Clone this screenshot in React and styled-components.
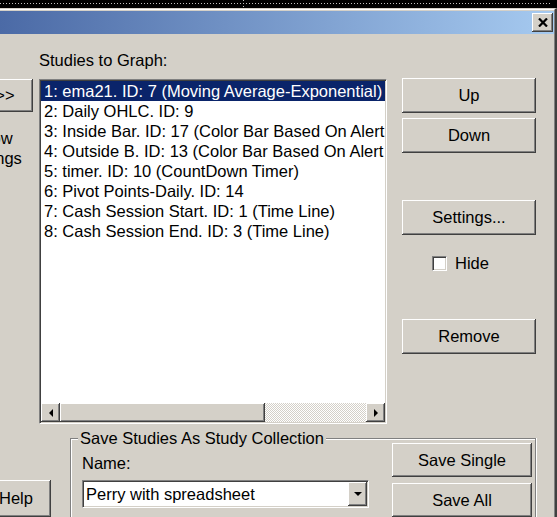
// dependencies
import React from 'react'
import styled, { createGlobalStyle, css } from 'styled-components'

// temporary data
const studies = [
    '1: ema21. ID: 7 (Moving Average-Exponential)',
    '2: Daily OHLC. ID: 9',
    '3: Inside Bar. ID: 17 (Color Bar Based On Alert Condition)',
    '4: Outside B. ID: 13 (Color Bar Based On Alert Condition)',
    '5: timer. ID: 10 (CountDown Timer)',
    '6: Pivot Points-Daily. ID: 14',
    '7: Cash Session Start. ID: 1 (Time Line)',
    '8: Cash Session End. ID: 3 (Time Line)',
]

// shared bevels
const raised = css`
    background: #d4d0c8;
    box-shadow: inset -1px -1px #404040, inset 1px 1px #ffffff,
        inset -2px -2px #808080, inset 2px 2px #d4d0c8;
`

const sunken = css`
    border: 1px solid;
    border-color: #808080 #ffffff #ffffff #808080;
    box-shadow: inset 1px 1px #404040, inset -1px -1px #d4d0c8;
    padding: 1px;
`

// styled components
const GlobalStyle = createGlobalStyle`
    html, body {
        margin: 0;
        padding: 0;
        background: #000;
    }
    body {
        font-family: "Liberation Sans", Arial, sans-serif;
        font-size: 16.5px;
        color: #000;
    }
`

const Screen = styled.div`
    width: 557px;
    height: 517px;
    background: #000;
    display: flex;
    flex-direction: column;
`

const Desktop = styled.div`
    height: 8px;
    flex-shrink: 0;
    background-color: #000;
    background-image:
        repeating-linear-gradient(90deg, #c0c0c0 0 1px, transparent 1px 3px),
        repeating-linear-gradient(180deg, #c0c0c0 0 1px, transparent 1px 3px);
    background-size: 552px 1px, 1px 8px;
    background-position: 0 3px, 243px 0;
    background-repeat: no-repeat;
`

const Window = styled.div`
    height: 509px;
    box-sizing: border-box;
    border-top: 1px solid #d4d0c8;
    border-right: 2px solid #404040;
    display: flex;
    flex-direction: column;
`

const Frame = styled.div`
    flex: 1;
    border-top: 1px solid #ffffff;
    border-right: 1px solid #808080;
    padding-top: 1px;
    background: #d4d0c8;
    display: flex;
    flex-direction: column;
`

const TitleBar = styled.div`
    height: 23px;
    flex-shrink: 0;
    background: linear-gradient(90deg, #4b6aa6, #a6caf0);
    display: flex;
    justify-content: flex-end;
    align-items: center;
    padding-right: 1px;
`

const CloseButton = styled.div`
    ${raised};
    width: 21px;
    height: 19px;
    display: flex;
    align-items: center;
    justify-content: center;
`

const Body = styled.div`
    display: flex;
    flex-direction: column;
`

const TopSection = styled.div`
    display: flex;
    height: 390px;
`

const LeftStrip = styled.div`
    width: ${(p) => p.$width}px;
    flex-shrink: 0;
    overflow: clip;
    display: flex;
    flex-direction: column;
    align-items: flex-end;
`

const Button = styled.div`
    ${raised};
    width: ${(p) => p.$width}px;
    height: ${(p) => p.$height || 35}px;
    margin-top: ${(p) => p.$top || 0}px;
    margin-right: ${(p) => p.$right || 0}px;
    flex-shrink: 0;
    display: flex;
    align-items: center;
    justify-content: center;
    white-space: nowrap;
    box-sizing: border-box;
`

const SideText = styled.div`
    width: 60px;
    flex-shrink: 0;
    margin-top: 16px;
    margin-right: 13px;
    text-align: center;
    line-height: 20px;
    white-space: nowrap;
`

const Center = styled.div`
    width: 348px;
    margin-left: 4px;
    display: flex;
    flex-direction: column;
`

const Label = styled.div`
    line-height: 19px;
    margin-top: ${(p) => p.$top || 0}px;
`

const ListBox = styled.div`
    ${sunken};
    margin-top: 9px;
    height: 345px;
    box-sizing: border-box;
    background: #fff;
    display: flex;
    flex-direction: column;
`

const Rows = styled.div`
    flex: 1;
    overflow: clip;
`

const Row = styled.div`
    height: 20px;
    line-height: 20px;
    padding-left: 3px;
    white-space: nowrap;
    overflow: clip;
    background: ${(p) => (p.$selected ? '#0a246a' : 'transparent')};
    color: ${(p) => (p.$selected ? '#fff' : '#000')};
`

const HScroll = styled.div`
    height: 19px;
    flex-shrink: 0;
    display: flex;
`

const ArrowButton = styled.div`
    ${raised};
    width: 19px;
    height: 19px;
    flex-shrink: 0;
    display: flex;
    align-items: center;
    justify-content: center;
`

const Thumb = styled.div`
    ${raised};
    width: 205px;
`

const Track = styled.div`
    flex: 1;
    background: repeating-conic-gradient(#ffffff 0 25%, #d4d0c8 0 50%) 0 0 / 2px 2px;
`

const RightColumn = styled.div`
    width: 134px;
    margin-left: 15px;
    display: flex;
    flex-direction: column;
`

const CheckRow = styled.div`
    height: 20px;
    margin-top: 18px;
    padding-left: 30px;
    display: flex;
    align-items: center;
    gap: 8px;
`

const CheckBox = styled.div`
    ${sunken};
    width: 15px;
    height: 15px;
    box-sizing: border-box;
    background: #fff;
`

const BottomSection = styled.div`
    height: 93px;
    display: flex;
`

const GroupBox = styled.div`
    width: 466px;
    height: 79px;
    flex-shrink: 0;
    margin-left: 19px;
    margin-top: 14px;
    box-sizing: border-box;
    border: 1px solid #808080;
    border-bottom: none;
    box-shadow: inset 1px 1px #ffffff, 1px 0 #ffffff;
    padding: 4px 3px 0 11px;
    display: flex;
    gap: 23px;
`

const GroupColumn = styled.div`
    width: ${(p) => p.$width}px;
    display: flex;
    flex-direction: column;
`

const GroupTitle = styled.div`
    align-self: flex-start;
    margin: -14px 0 0 -4px;
    padding: 0 2px;
    line-height: 19px;
    background: #d4d0c8;
    white-space: nowrap;
`

const Combo = styled.div`
    ${sunken};
    margin-top: 7px;
    height: 28px;
    flex-shrink: 0;
    box-sizing: border-box;
    background: #fff;
    display: flex;
    align-items: center;
`

const ComboText = styled.div`
    flex: 1;
    padding-left: 2px;
    white-space: nowrap;
`

const DropButton = styled(ArrowButton)`
    height: 24px;
`

// little drawings
const Triangle = ({ dir }) => {
    const points = {
        left: '4,0 4,8 0,4',
        right: '0,0 0,8 4,4',
        down: '0,0 8,0 4,4',
    }[dir]
    const size = dir === 'down' ? { width: 8, height: 4 } : { width: 4, height: 8 }
    return (
        <svg {...size} viewBox={`0 0 ${size.width} ${size.height}`}>
            <polygon points={points} fill="#000" />
        </svg>
    )
}

const CloseGlyph = () => (
    <svg width="10" height="9" viewBox="0 0 10 9">
        <path d="M1 0.5 L9 8.5 M9 0.5 L1 8.5" stroke="#000" strokeWidth="2.2" />
    </svg>
)

// dialog driver code
const App = () => {
    return (
        <Screen>
            <GlobalStyle />
            <Desktop />
            <Window>
                <Frame>
                    <TitleBar>
                        <CloseButton>
                            <CloseGlyph />
                        </CloseButton>
                    </TitleBar>
                    <Body>
                        <TopSection>
                            <LeftStrip $width={35}>
                                <Button $width={90} $height={33} $top={45} $right={2}>Add &gt;&gt;</Button>
                                <SideText>
                                    Show
                                    <br />
                                    Settings
                                </SideText>
                            </LeftStrip>
                            <Center>
                                <Label $top={17}>Studies to Graph:</Label>
                                <ListBox>
                                    <Rows>
                                        {studies.map((s, i) => (
                                            <Row key={s} $selected={i === 0}>{s}</Row>
                                        ))}
                                    </Rows>
                                    <HScroll>
                                        <ArrowButton><Triangle dir="left" /></ArrowButton>
                                        <Thumb />
                                        <Track />
                                        <ArrowButton><Triangle dir="right" /></ArrowButton>
                                    </HScroll>
                                </ListBox>
                            </Center>
                            <RightColumn>
                                <Button $width={134} $top={44}>Up</Button>
                                <Button $width={134} $top={5}>Down</Button>
                                <Button $width={134} $top={47}>Settings...</Button>
                                <CheckRow>
                                    <CheckBox />
                                    <span>Hide</span>
                                </CheckRow>
                                <Button $width={134} $top={46}>Remove</Button>
                            </RightColumn>
                        </TopSection>
                        <BottomSection>
                            <LeftStrip $width={51}>
                                <Button $width={70} $height={37} $top={56}>Help</Button>
                            </LeftStrip>
                            <GroupBox>
                                <GroupColumn $width={287}>
                                    <GroupTitle>Save Studies As Study Collection</GroupTitle>
                                    <Label $top={6}>Name:</Label>
                                    <Combo>
                                        <ComboText>Perry with spreadsheet</ComboText>
                                        <DropButton><Triangle dir="down" /></DropButton>
                                    </Combo>
                                </GroupColumn>
                                <GroupColumn $width={140}>
                                    <Button $width={140} $height={34}>Save Single</Button>
                                    <Button $width={140} $height={34} $top={6}>Save All</Button>
                                </GroupColumn>
                            </GroupBox>
                        </BottomSection>
                    </Body>
                </Frame>
            </Window>
        </Screen>
    )
}

export default App
